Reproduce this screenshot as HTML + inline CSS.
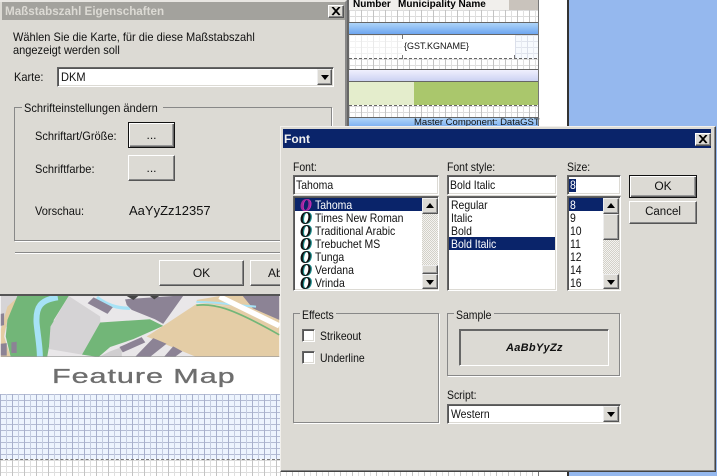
<!DOCTYPE html>
<html><head><meta charset="utf-8"><style>
html,body{margin:0;padding:0;background:#fff}
#p{position:relative;width:717px;height:476px;overflow:hidden;background:#fff;font:12px/14px "Liberation Sans",sans-serif;color:#111}
#p div,#p svg{position:absolute;box-sizing:border-box}
.t{white-space:nowrap;transform-origin:0 0;transform:scaleX(.87)}
.t.g{transform:scaleX(.92)}
.t.n{transform:none}
.dlg{background:#dcdad4}
.grid{background-color:#fff;background-image:linear-gradient(90deg,#c4c4c4 1px,transparent 1px),linear-gradient(90deg,#e0e0e0 1px,transparent 1px),linear-gradient(#dcdcdc 1px,transparent 1px);background-size:12px 12px,6px 6px,6px 6px}
.bgrid{background-color:#edf4fe;background-image:linear-gradient(90deg,#a8b0cc 1px,transparent 1px),linear-gradient(90deg,#c4cce0 1px,transparent 1px),linear-gradient(#b4bcd4 1px,transparent 1px);background-size:12px 12px,6px 6px,6px 6px}
.sunk{background:#fff;border:1px solid;border-color:#666 #fff #fff #666;box-shadow:inset 1px 1px 0 #555,inset -1px -1px 0 #dcdad4}
.btn{background:#dcdad4;border:1px solid;border-color:#fff #555 #555 #fff;box-shadow:inset -1px -1px 0 #888;text-align:center}
.def{background:#dcdad4;border:1px solid #111;box-shadow:inset 1px 1px 0 #fff,inset -1px -1px 0 #666,inset -2px -2px 0 #999;text-align:center}
.sb{background:#dcdad4;border:1px solid;border-color:#eee #555 #555 #eee;box-shadow:inset -1px -1px 0 #999}
.track{background:repeating-conic-gradient(#f4f3f0 0 25%,#d2d0c8 0 50%) 0 0/2px 2px}
.up::after,.dn::after{content:"";position:absolute;left:50%;top:50%;margin-left:-4px;border-left:4px solid transparent;border-right:4px solid transparent}
.up::after{margin-top:-3px;border-bottom:5px solid #000}
.dn::after{margin-top:-2px;border-top:5px solid #000}
.grp{border:1px solid #888;box-shadow:1px 1px 0 #fff}
.sel{background:#0a246a}
.o{font:italic bold 18px/14px "Liberation Serif",serif;color:#111;text-shadow:1.5px 0 0 #1a8a8a;transform:scaleX(.85);transform-origin:0 0}
</style></head><body><div id="p">

<!-- desktop right -->
<div style="left:568px;top:0;width:149px;height:476px;background:#95b8ee"></div>
<div style="left:567px;top:0;width:2px;height:476px;background:#333"></div>

<!-- report designer -->
<div style="left:347px;top:0;width:2px;height:128px;background:#666"></div>
<div style="left:349px;top:0;width:190px;height:128px;background:#fff"></div>
<div style="left:349px;top:0;width:160px;height:10px;background:#f1efec"></div>
<div style="left:509px;top:0;width:30px;height:10px;background:#c9c3bc"></div>
<div class="t n" style="left:353px;top:-2px;font-weight:bold;font-size:10px;line-height:14px;color:#000">Number</div>
<div class="t n" style="left:398px;top:-2px;font-weight:bold;font-size:10px;line-height:14px;color:#000">Municipality Name</div>
<div class="grid" style="left:349px;top:10px;width:190px;height:13px"></div>
<div style="left:349px;top:22px;width:190px;height:1px;background:#666"></div>
<div style="left:349px;top:23px;width:190px;height:11px;background:linear-gradient(#aed4f8,#6ea6f0)"></div>
<div style="left:349px;top:34px;width:190px;height:1px;background:#666"></div>
<div class="grid" style="left:349px;top:35px;width:53px;height:24px;opacity:.35"></div>
<div style="left:402px;top:35px;width:1px;height:4px;background:#777"></div>
<div style="left:402px;top:55px;width:1px;height:4px;background:#777"></div>
<div style="left:514px;top:55px;width:1px;height:4px;background:#777"></div>
<div class="bgrid" style="left:515px;top:35px;width:24px;height:24px;opacity:.4"></div>
<div class="t n" style="left:404px;top:40px;font-size:9px;line-height:12px">{GST.KGNAME}</div>
<div style="left:349px;top:58px;width:190px;height:1px;background:repeating-linear-gradient(90deg,#666 0 3px,transparent 3px 5px)"></div>
<div class="grid" style="left:349px;top:59px;width:190px;height:10px"></div>
<div style="left:349px;top:69px;width:190px;height:1px;background:#666"></div>
<div style="left:349px;top:70px;width:190px;height:11px;background:linear-gradient(#f0f0fe,#ccd2f2)"></div>
<div style="left:349px;top:81px;width:190px;height:1px;background:#666"></div>
<div style="left:349px;top:82px;width:65px;height:23px;background:#e4edcc"></div>
<div style="left:414px;top:82px;width:125px;height:23px;background:#aac76c"></div>
<div style="left:349px;top:105px;width:190px;height:1px;background:repeating-linear-gradient(90deg,#666 0 3px,transparent 3px 5px)"></div>
<div class="grid" style="left:349px;top:106px;width:190px;height:11px"></div>
<div style="left:349px;top:117px;width:190px;height:1px;background:#666"></div>
<div style="left:349px;top:118px;width:190px;height:10px;background:linear-gradient(#b2d6f8,#74aaf0)"></div>
<div class="t n" style="left:414px;top:116px;font-size:9.5px;line-height:13px">Master Component: DataGST</div>
<div style="left:538px;top:0;width:1px;height:128px;background:#777"></div>

<!-- left-bottom report -->
<div style="left:0;top:295px;width:280px;height:181px;background:#fff"></div>
<svg style="left:0;top:296px" width="280" height="61" viewBox="0 168 840 184">
<rect x="0" y="168" width="840" height="184" fill="#e9e7e9"/>
<polygon points="0,168 60,168 20,260 0,270" fill="#d6d4d6"/>
<polygon points="55,168 20,240 10,290 30,352 0,352 0,270 20,200" fill="#e3cca3"/>
<polygon points="50,168 205,168 160,240 140,352 30,352 15,290 20,240" fill="#72b678"/>
<path d="M172 172C120 180 105 200 108 250C112 290 118 320 118 352" stroke="#a6e2f6" stroke-width="18" fill="none"/>
<polygon points="205,168 300,230 300,248 245,345 145,328 150,260" fill="#d5d3d5"/>
<polygon points="300,248 450,238 490,258 400,298 330,322 295,352 245,345" fill="#72b678"/>
<polygon points="295,352 330,335 365,322 365,352" fill="#d0ced0"/>
<path d="M290 172C320 195 350 205 390 205" stroke="#a6e2f6" stroke-width="10" fill="none"/>
<polygon points="280,172 338,202 322,222 262,190" fill="#8c8395"/>
<polygon points="375,178 520,168 550,168 490,252 465,238 395,210 380,195" fill="#8c8395"/>
<polygon points="380,168 415,168 400,180" fill="#444"/>
<polygon points="450,168 478,168 463,178" fill="#444"/>
<polygon points="0,222 10,220 10,256 0,258" fill="#8c8395"/>
<polygon points="0,312 18,310 18,348 0,348" fill="#8c8395"/>
<polygon points="32,308 48,306 48,340 32,340" fill="#8c8395"/>
<polygon points="490,258 590,192 700,200 840,286 840,352 590,352 440,290" fill="#e4cda6"/>
<polygon points="590,180 660,168 730,168 840,170 840,290 700,200 600,190" fill="#e4cda6"/>
<polygon points="358,322 425,292 436,308 368,338" fill="#8c8395"/>
<polygon points="405,352 460,295 500,312 450,352" fill="#8c8395"/>
<polygon points="492,352 520,320 548,335 525,352" fill="#8c8395"/>
<polygon points="730,168 840,168 840,240 760,205" fill="#8c8395"/>
<path d="M590 186C650 185 700 195 770 200" stroke="#a6e2f6" stroke-width="6" fill="none"/>
<path d="M590 196C640 190 690 200 840 285" stroke="#72b678" stroke-width="5" fill="none"/>
<path d="M660 170L840 258" stroke="#fff" stroke-width="16" fill="none"/>
<rect x="0" y="350" width="840" height="2" fill="#999"/>
</svg>
<div class="t" style="left:52px;top:364px;font-size:20px;line-height:26px;letter-spacing:.6px;color:#6e6e6e;-webkit-text-stroke:.3px #6e6e6e;transform:scaleX(1.53)">Feature Map</div>
<div class="bgrid" style="left:0;top:394px;width:280px;height:65px"></div>
<div class="grid" style="left:0;top:459px;width:280px;height:17px;border-top:1px dashed #777"></div>
<div class="grid" style="left:280px;top:470px;width:258px;height:6px"></div>
<div style="left:538px;top:470px;width:1px;height:6px;background:#777"></div>

<!-- German dialog -->
<div class="dlg" style="left:0;top:0;width:347px;height:295px;border-top:2px solid #e8e6e2;border-right:2px solid #888"></div>
<div style="left:0;top:294px;width:347px;height:2px;background:#555"></div>
<div style="left:2px;top:2px;width:343px;height:18px;background:#a3a29d"></div>
<div class="t" style="left:5px;top:4px;font-weight:bold;font-size:12px;line-height:14px;color:#dcdad4;transform:scaleX(.97)">Maßstabszahl Eigenschaften</div>
<div class="btn" style="left:328px;top:5px;width:16px;height:13px"></div>
<svg style="left:331px;top:7px" width="10" height="9"><path d="M1 0L8 8M2 0L9 8M8 0L1 8M9 0L2 8" stroke="#000" stroke-width="1"/></svg>
<div class="t g" style="left:13px;top:30px">Wählen Sie die Karte, für die diese Maßstabszahl</div>
<div class="t g" style="left:13px;top:43px">angezeigt werden soll</div>
<div class="t g" style="left:14px;top:70px">Karte:</div>
<div class="sunk" style="left:57px;top:67px;width:277px;height:20px"></div>
<div class="t g" style="left:61px;top:70px">DKM</div>
<div class="sb dn" style="left:317px;top:69px;width:15px;height:16px"></div>
<div class="grp" style="left:14px;top:107px;width:318px;height:134px"></div>
<div class="dlg" style="left:22px;top:100px;width:141px;height:14px"></div>
<div class="t g" style="left:24px;top:101px">Schrifteinstellungen ändern</div>
<div class="t g" style="left:35px;top:129px">Schriftart/Größe:</div>
<div class="def" style="left:128px;top:122px;width:47px;height:26px;line-height:24px">...</div>
<div class="t g" style="left:35px;top:162px">Schriftfarbe:</div>
<div class="btn" style="left:128px;top:155px;width:47px;height:26px;line-height:24px">...</div>
<div class="t g" style="left:35px;top:204px">Vorschau:</div>
<div class="t n" style="left:129px;top:203px;font-size:13px;line-height:15px">AaYyZz12357</div>
<div style="left:15px;top:252px;width:330px;height:1px;background:#888"></div>
<div style="left:15px;top:253px;width:330px;height:1px;background:#fff"></div>
<div class="btn" style="left:159px;top:260px;width:85px;height:26px;line-height:24px">OK</div>
<div class="btn" style="left:250px;top:260px;width:85px;height:26px;line-height:24px;text-align:left;padding-left:17px">Abbrechen</div>

<!-- Font dialog -->
<div class="dlg" style="left:280px;top:126px;width:436px;height:346px;border:1px solid;border-color:#f2f0ec #444 #444 #f2f0ec;box-shadow:inset -1px -1px 0 #888"></div>
<div style="left:283px;top:129px;width:428px;height:19px;background:#0a246a"></div>
<div class="t n" style="left:284px;top:132px;font-weight:bold;font-size:12px;line-height:14px;color:#f0f0f0">Font</div>
<div class="btn" style="left:695px;top:133px;width:16px;height:13px"></div>
<svg style="left:698px;top:135px" width="10" height="9"><path d="M1 0L8 8M2 0L9 8M8 0L1 8M9 0L2 8" stroke="#000" stroke-width="1"/></svg>

<div class="t" style="left:293px;top:160px">Font:</div>
<div class="t" style="left:447px;top:160px">Font style:</div>
<div class="t" style="left:567px;top:160px">Size:</div>

<div class="sunk" style="left:293px;top:175px;width:146px;height:20px"></div>
<div class="t" style="left:296px;top:178px">Tahoma</div>
<div class="sunk" style="left:447px;top:175px;width:110px;height:20px"></div>
<div class="t" style="left:450px;top:178px">Bold Italic</div>
<div class="sunk" style="left:567px;top:175px;width:54px;height:20px"></div>
<div class="sel" style="left:569px;top:179px;width:7px;height:13px"></div>
<div class="t" style="left:570px;top:178px;color:#fff">8</div>

<!-- font list -->
<div class="sunk" style="left:293px;top:196px;width:146px;height:95px"></div>
<div class="sel" style="left:295px;top:198px;width:127px;height:13px"></div>
<div class="o" style="left:300px;top:198px;color:#a02a9a;text-shadow:1px 0 0 #d030c0">O</div>
<div class="o" style="left:300px;top:211px">O</div>
<div class="o" style="left:300px;top:224px">O</div>
<div class="o" style="left:300px;top:237px">O</div>
<div class="o" style="left:300px;top:250px">O</div>
<div class="o" style="left:300px;top:263px">O</div>
<div class="o" style="left:300px;top:276px">O</div>
<div class="t" style="left:315px;top:198px;color:#fff">Tahoma</div>
<div class="t" style="left:315px;top:211px">Times New Roman</div>
<div class="t" style="left:315px;top:224px">Traditional Arabic</div>
<div class="t" style="left:315px;top:237px">Trebuchet MS</div>
<div class="t" style="left:315px;top:250px">Tunga</div>
<div class="t" style="left:315px;top:263px">Verdana</div>
<div class="t" style="left:315px;top:276px">Vrinda</div>
<div class="track" style="left:422px;top:198px;width:16px;height:91px"></div>
<div class="sb up" style="left:422px;top:198px;width:16px;height:16px"></div>
<div class="sb" style="left:422px;top:265px;width:16px;height:9px"></div>
<div class="sb dn" style="left:422px;top:274px;width:16px;height:15px"></div>

<!-- style list -->
<div class="sunk" style="left:447px;top:196px;width:110px;height:95px"></div>
<div class="t" style="left:451px;top:198px">Regular</div>
<div class="t" style="left:451px;top:211px">Italic</div>
<div class="t" style="left:451px;top:224px">Bold</div>
<div class="sel" style="left:449px;top:237px;width:106px;height:13px"></div>
<div class="t" style="left:451px;top:237px;color:#fff">Bold Italic</div>

<!-- size list -->
<div class="sunk" style="left:567px;top:196px;width:54px;height:95px"></div>
<div class="sel" style="left:569px;top:198px;width:34px;height:13px"></div>
<div class="t" style="left:570px;top:198px;color:#fff">8</div>
<div class="t" style="left:570px;top:211px">9</div>
<div class="t" style="left:570px;top:224px">10</div>
<div class="t" style="left:570px;top:237px">11</div>
<div class="t" style="left:570px;top:250px">12</div>
<div class="t" style="left:570px;top:263px">14</div>
<div class="t" style="left:570px;top:276px">16</div>
<div class="track" style="left:603px;top:198px;width:16px;height:91px"></div>
<div class="sb up" style="left:603px;top:198px;width:16px;height:16px"></div>
<div class="sb" style="left:603px;top:214px;width:16px;height:26px"></div>
<div class="sb dn" style="left:603px;top:274px;width:16px;height:15px"></div>

<div class="def" style="left:629px;top:175px;width:68px;height:23px;line-height:21px">OK</div>
<div class="btn" style="left:629px;top:201px;width:68px;height:23px;line-height:21px;font-size:11.5px">Cancel</div>

<!-- effects -->
<div class="grp" style="left:293px;top:313px;width:146px;height:110px"></div>
<div class="dlg" style="left:300px;top:308px;width:36px;height:12px"></div>
<div class="t" style="left:302px;top:308px">Effects</div>
<div class="sunk" style="left:302px;top:329px;width:13px;height:13px"></div>
<div class="t" style="left:320px;top:329px">Strikeout</div>
<div class="sunk" style="left:302px;top:351px;width:13px;height:13px"></div>
<div class="t" style="left:320px;top:351px">Underline</div>

<!-- sample -->
<div class="grp" style="left:447px;top:313px;width:173px;height:63px"></div>
<div class="dlg" style="left:454px;top:308px;width:40px;height:12px"></div>
<div class="t" style="left:456px;top:308px">Sample</div>
<div style="left:459px;top:329px;width:150px;height:37px;border:1px solid;border-color:#666 #fff #fff #666;box-shadow:inset 1px 1px 0 #666"></div>
<div class="t n" style="left:506px;top:341px;font:italic bold 11px/14px 'Liberation Sans',sans-serif;letter-spacing:.3px">AaBbYyZz</div>

<!-- script -->
<div class="t" style="left:447px;top:388px">Script:</div>
<div class="sunk" style="left:447px;top:404px;width:174px;height:20px"></div>
<div class="t" style="left:451px;top:407px">Western</div>
<div class="sb dn" style="left:603px;top:406px;width:16px;height:16px"></div>
</div></body></html>
